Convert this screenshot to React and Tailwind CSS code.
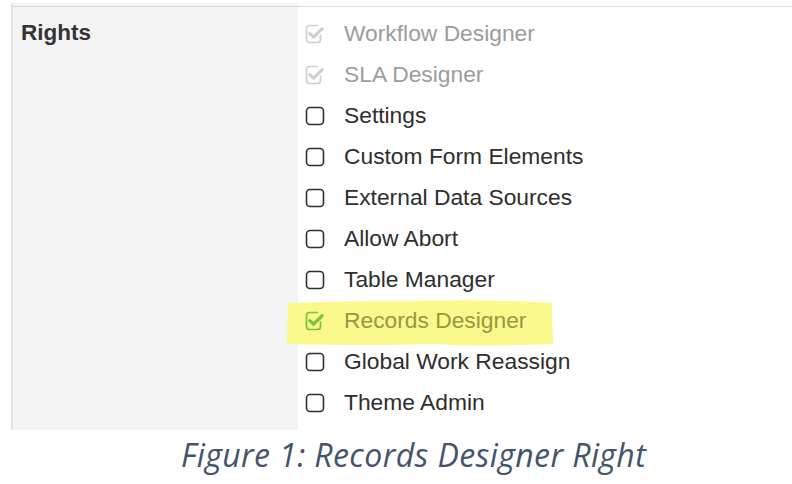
import React from "react";

const rows = [
  { label: "Workflow Designer", state: "disabled" },
  { label: "SLA Designer", state: "disabled" },
  { label: "Settings", state: "off" },
  { label: "Custom Form Elements", state: "off" },
  { label: "External Data Sources", state: "off" },
  { label: "Allow Abort", state: "off" },
  { label: "Table Manager", state: "off" },
  { label: "Records Designer", state: "on" },
  { label: "Global Work Reassign", state: "off" },
  { label: "Theme Admin", state: "off" },
];

function Box({ state }) {
  if (state === "off") {
    return (
      <svg width="20" height="20" viewBox="0 0 20 20" className="shrink-0">
        <rect x="1.5" y="1.5" width="17" height="17" rx="3.5" fill="none" stroke="#2f2f2f" strokeWidth="1.6" />
      </svg>
    );
  }
  const c = state === "on" ? "#7cc23c" : "#cfcfcf";
  return (
    <svg width="20" height="20" viewBox="0 0 20 20" className="shrink-0">
      <path d="M15.5 10.5 V15.5 Q15.5 18.5 12.5 18.5 H4.5 Q1.5 18.5 1.5 15.5 V4.5 Q1.5 1.5 4.5 1.5 H13" fill="none" stroke={c} strokeWidth="1.7" />
      <path d="M4.8 9.6 L8.6 13.2 L17.2 4.6" fill="none" stroke={c} strokeWidth="3.2" strokeLinecap="round" strokeLinejoin="round" />
    </svg>
  );
}

export default function App() {
  return (
    <div className="w-[792px] h-[484px] bg-white overflow-hidden" style={{ fontFamily: '"Liberation Sans", Arial, sans-serif' }}>
      <div className="ml-[11px] pt-[3px] flex flex-col">
        <div className="flex border-l-2 border-[#e2e2e2]">
          <div className="w-[285px] bg-[#f4f4f4] flex flex-col">
            <div className="h-[3px]" />
            <div className="border-t border-[#dcdcdc]" />
            <div className="pl-[8px] pt-[8px] h-[43px] flex items-center font-bold text-[22.5px] text-[#333]">
              Rights
            </div>
          </div>
          <div className="flex-1 flex flex-col">
            <div className="h-[3px]" />
            <div className="border-t border-[#dcdcdc]" />
            <div className="relative flex flex-col pt-[6px] pb-[7px]">
              <svg className="absolute left-[-12px] top-[293px]" width="268" height="47" viewBox="0 0 268 47">
                <path d="M2 3 Q60 1 130 1 Q200 -1 266 3 L267 44 Q200 47 150 44 Q80 46 1 44 Z" fill="#f9f98c" />
              </svg>
              {rows.map((r) => (
                <div key={r.label} className="relative h-[41px] flex items-center pl-[7px]">
                  <Box state={r.state} />
                  <span
                    className={
                      "ml-[19px] text-[22.8px] " +
                      (r.state === "disabled"
                        ? "text-[#9c9c9c]"
                        : r.state === "on"
                        ? "text-[#98983f]"
                        : "text-[#2e2e2e]")
                    }
                  >
                    {r.label}
                  </span>
                </div>
              ))}
            </div>
          </div>
        </div>
        <div
          className="pl-[170px] pt-[9px] italic text-[32px] tracking-[0.4px] text-[#44546a] leading-none"
          style={{ fontFamily: '"Open Sans", sans-serif' }}
        >
          Figure 1: Records Designer Right
        </div>
      </div>
    </div>
  );
}
